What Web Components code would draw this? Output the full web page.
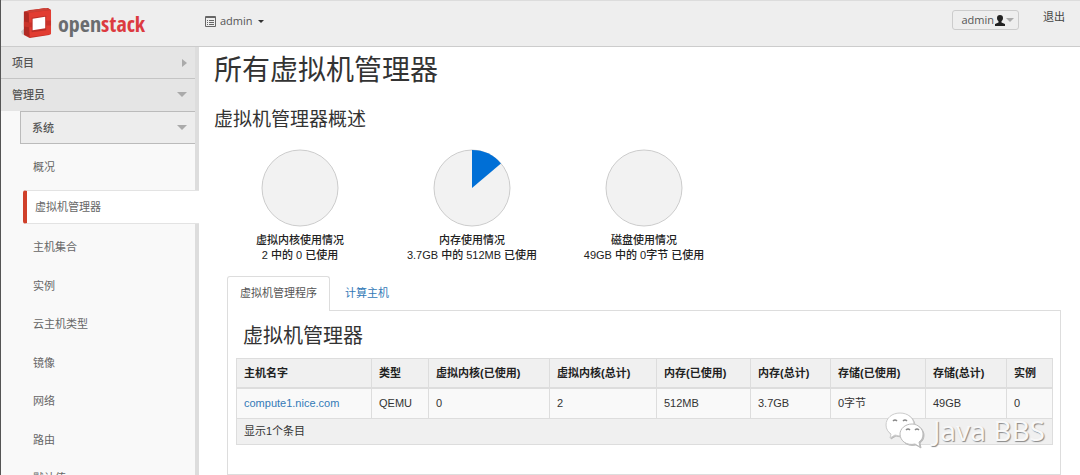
<!DOCTYPE html>
<html lang="zh-CN">
<head>
<meta charset="utf-8">
<title>所有虚拟机管理器 - OpenStack</title>
<style>
html, body { margin: 0; height: 100%; }
body {
  font: 11px/16px "Liberation Sans", "Noto Sans CJK SC", sans-serif;
  color: #333; background: #fff; overflow: hidden;
}
</style>
</head>
<body>
<dashboard-app></dashboard-app>
<script>
function define(name, html, setup) {
  const tpl = document.createElement('template');
  tpl.innerHTML = '<style>*{box-sizing:border-box}:host{display:block;box-sizing:border-box}</style>' + html;
  customElements.define(name, class extends HTMLElement {
    constructor() {
      super();
      this.attachShadow({ mode: 'open' }).append(tpl.content.cloneNode(true));
    }
    connectedCallback() { if (setup) setup(this, this.shadowRoot); }
  });
}

define('stack-logo', `
<style>
:host { display: flex; align-items: center; gap: 6px; }
svg { width: 31px; height: 30px; flex: none; }
span { font: 22px/28px "Open Sans Condensed", "Roboto Condensed", "Open Sans", sans-serif; color: #6a6c6f; }
b { font-weight: inherit; color: #dc3a40; }
</style>
<svg viewBox="0 0 32 31" aria-hidden="true">
  <path d="M0 24 4 21v7l-3-1z" fill="#c9c9c9"/>
  <path d="M3 4 9 2l19-2 3 2v24l-2 2-20 3-6-3z" fill="#c42d25"/>
  <path d="M3 4 24 0l7 2-23 3z" fill="#cc4036"/>
  <path d="M3 4 8 5l1 25-6-3z" fill="#b02a23"/>
  <path d="M8 5 31 2v25L9 30z" fill="#e23d32"/>
  <path d="M3 14 8 15v5l-5-1zM8 15h4v5H8zM26 13h5v5h-5z" fill="#c9332a"/>
  <path d="M11 10 26 8v15l-15 2z" fill="#bd2f28"/>
  <path d="M12 11 25 9v12l-13 2z" fill="#fff"/>
</svg>
<span>open<b>stack</b></span>`);

define('top-bar', `
<style>
:host { display: flex; align-items: flex-start; height: 47px; padding: 0 15px 0 20px; background: #eee; border-top: 1px solid #dcdcdc; border-bottom: 1px solid #ccc; }
stack-logo { padding-top: 7px; width: 184px; }
button { display: flex; align-items: center; font: 11px/16px "Open Sans", sans-serif; color: #555; background: none; border: 0; padding: 0; }
.project { gap: 4px; margin-top: 12px; }
.project i { border: 3px solid transparent; border-top-color: #333; border-bottom: 0; margin-left: 1px; }
.user { margin-left: auto; margin-top: 9px; height: 20px; padding: 0 4px 0 8px; border: 1px solid #ccc; border-radius: 3px; }
.user i { border: 4px solid transparent; border-top-color: #aaa; border-bottom: 0; }
a { margin: 8px 0 0 24px; color: #444; text-decoration: none; }
</style>
<stack-logo></stack-logo>
<button class="project" type="button">
  <svg width="11" height="11" viewBox="0 0 11 11" aria-hidden="true"><path d="M.5.5h10v10H.5zM0 1.500h11M2 4.500h1M4 4.500h5M2 6.500h1M4 6.500h5M2 8.500h1M4 8.500h5" fill="none" stroke="#666"/></svg>
  admin <i></i>
</button>
<button class="user" type="button">admin
  <svg width="12" height="11" viewBox="0 0 12 11" aria-hidden="true"><path d="M6 0c2 0 3 1.300 3 3 0 1.500-.6 2.500-1.500 3.200v1.300L11 9v2H1V9l3.500-1.500V6.200C3.600 5.500 3 4.500 3 3c0-1.700 1-3 3-3z" fill="#222"/></svg>
  <i></i>
</button>
<a href="#logout">退出</a>`);

define('nav-heading', `
<style>
button { display: flex; width: 100%; height: 31px; align-items: center; justify-content: space-between; font: inherit; color: #555; font-weight: 500; background: none; border: 0; padding: 0 8px 0 11px; text-align: left; }
i { border: 5px solid transparent; border-top-color: #aaa; border-bottom: 0; }
:host([closed]) i { border: 4px solid transparent; border-left: 5px solid #aaa; border-right: 0; }
</style>
<button type="button"><slot></slot><i></i></button>`);

define('side-nav', `
<style>
:host { width: 198px; height: 100%; flex: none; background: linear-gradient(to left, #ddd 4px, #f9f9f9 4px); overflow: hidden; }
.top { background: #e5e5e5; border-bottom: 1px solid #c4c4c4; margin-right: 4px; }
.open { border-bottom-color: #e5e5e5; }
.sub { background: #ededed; border: 1px solid #bbb; border-right: 0; margin: 0 4px 0 19px; }
ul { list-style: none; margin: 0; padding: 4px 0 0 22px; }
li { padding-bottom: 4px; }
li:nth-child(odd) { padding-bottom: 5px; }
a { display: block; padding: 9px 10px; line-height: 16px; color: #666; text-decoration: none; }
li.on { padding-bottom: 6px; padding-top: 1px; }
.on a { background: #fff; border: 1px solid #e3e3e3; border-right: 0; border-left: 4px solid #d0402b; border-radius: 3px 0 0 3px; padding: 8px; }
.first a { padding-top: 11px; }
</style>
<nav>
  <nav-heading class="top" closed>项目</nav-heading>
  <nav-heading class="top open">管理员</nav-heading>
  <nav-heading class="sub">系统</nav-heading>
  <ul>
    <li class="first"><a href="#overview">概况</a></li>
    <li class="on"><a href="#hypervisors" aria-current="page">虚拟机管理器</a></li>
    <li><a href="#aggregates">主机集合</a></li>
    <li><a href="#instances">实例</a></li>
    <li><a href="#flavors">云主机类型</a></li>
    <li><a href="#images">镜像</a></li>
    <li><a href="#networks">网络</a></li>
    <li><a href="#routers">路由</a></li>
    <li><a href="#defaults">默认值</a></li>
  </ul>
</nav>`);

define('usage-chart', `
<style>
:host { width: 172px; text-align: center; font-weight: 500; line-height: 15px; color: #222; }
svg { display: block; width: 78px; height: 78px; margin: 0 auto 6px; }
</style>
<svg viewBox="-39 -39 78 78" aria-hidden="true"><circle r="38" fill="#f2f2f2" stroke="#ccc"/><path fill="#006fd6"/></svg>
<slot></slot>`, (el, root) => {
  const share = Number(el.getAttribute('used')) * 2 * Math.PI;
  if (share) root.querySelector('path').setAttribute('d',
    `M0 0V-38A38 38 0 0 1 ${38 * Math.sin(share)} ${-38 * Math.cos(share)}Z`);
});

define('hypervisor-table', `
<style>
table { width: 100%; table-layout: fixed; border-collapse: collapse; border: 1px solid #ddd; }
th, td { text-align: left; padding: 6px 7px; line-height: 16px; border: 1px solid #ddd; white-space: nowrap; }
th { background: #f0f0f0; border-bottom: 2px solid #ddd; font-weight: bold; color: #222; }
tbody td { background: #f9f9f9; padding-bottom: 7px; }
tfoot td { background: #f0f0f0; padding: 4px 7px 5px; }
a { color: #337ab7; text-decoration: none; }
</style>
<table>
  <colgroup><col style="width:135px"><col style="width:57px"><col style="width:121px"><col style="width:107px"><col style="width:94px"><col style="width:80px"><col style="width:95px"><col style="width:81px"><col style="width:46px"></colgroup>
  <thead><tr><th>主机名字</th><th>类型</th><th>虚拟内核(已使用)</th><th>虚拟内核(总计)</th><th>内存(已使用)</th><th>内存(总计)</th><th>存储(已使用)</th><th>存储(总计)</th><th>实例</th></tr></thead>
  <tbody><tr><td><a href="#compute1">compute1.nice.com</a></td><td>QEMU</td><td>0</td><td>2</td><td>512MB</td><td>3.7GB</td><td>0字节</td><td>49GB</td><td>0</td></tr></tbody>
  <tfoot><tr><td colspan="9">显示1个条目</td></tr></tfoot>
</table>`);

define('tab-panel', `
<style>
.tabs { display: flex; }
a { padding: 8px 12px 9px; line-height: 16px; border: 1px solid transparent; border-bottom: 0; color: #337ab7; text-decoration: none; }
a + a { margin-left: 2px; }
.on { color: #555; background: #fff; border-color: #ddd; border-radius: 3px 3px 0 0; margin-bottom: -1px; position: relative; }
section { border: 1px solid #ddd; padding: 12px 8px 29px; }
h3 { font-size: 20px; line-height: 26px; font-weight: 400; margin: 0 0 9px 7px; }
</style>
<div class="tabs" role="tablist"><a class="on" href="#hypervisor" role="tab" aria-selected="true">虚拟机管理程序</a><a href="#hosts" role="tab">计算主机</a></div>
<section><h3>虚拟机管理器</h3><slot></slot></section>`);

define('water-mark', `
<style>
:host { position: absolute; right: 35px; bottom: 27px; display: flex; align-items: center; gap: 8px; font: 28px/36px "Noto Sans", sans-serif; color: #f8f8f8; text-shadow: 1px 1px 1px #888; pointer-events: none; }
svg { width: 40px; height: 36px; filter: drop-shadow(1px 1px 0 #bbb); }
</style>
<svg viewBox="0 0 40 36" aria-hidden="true">
  <path d="M15 1C7 1 1 6 1 13c0 4 2 7 5 9l-1 4 5-3c9 3 19-2 19-10C29 6 23 1 15 1z" fill="#fff" stroke="#ccc"/>
  <path d="M27 12c-7 0-12 5-12 10 0 7 7 12 15 10l5 3-1-5c3-2 4-5 4-8 0-5-5-10-11-10z" fill="#fff" stroke="#bbb"/>
  <path d="M8 9q2-2 4 0M18 9q2-2 4 0M21 18q2-2 4 0M30 18q2-2 4 0" fill="none" stroke="#888" stroke-width="1.500"/>
</svg><span>Java BBS</span>`);

define('dashboard-app', `
<style>
:host { height: 100%; display: flex; flex-direction: column; border-left: 1px solid #555; position: relative; overflow: hidden; }
top-bar { flex: none; }
.body { display: flex; flex: 1; min-height: 0; }
main { flex: 1; min-width: 0; padding: 6px 19px 0 15px; }
h1 { font-size: 28px; line-height: 36px; font-weight: 400; margin: 0; }
h2 { font-size: 19px; line-height: 26px; font-weight: 400; margin: 18px 0 16px; }
.charts { display: flex; }
tab-panel { margin: 13px 0 0 13px; }
</style>
<top-bar></top-bar>
<div class="body">
  <side-nav></side-nav>
  <main>
    <h1>所有虚拟机管理器</h1>
    <h2>虚拟机管理器概述</h2>
    <div class="charts">
      <usage-chart used="0">虚拟内核使用情况<br>2 中的 0 已使用</usage-chart>
      <usage-chart used="0.138">内存使用情况<br>3.7GB 中的 512MB 已使用</usage-chart>
      <usage-chart used="0">磁盘使用情况<br>49GB 中的 0字节 已使用</usage-chart>
    </div>
    <tab-panel><hypervisor-table></hypervisor-table></tab-panel>
  </main>
</div>
<water-mark></water-mark>`);
</script>
</body>
</html>
